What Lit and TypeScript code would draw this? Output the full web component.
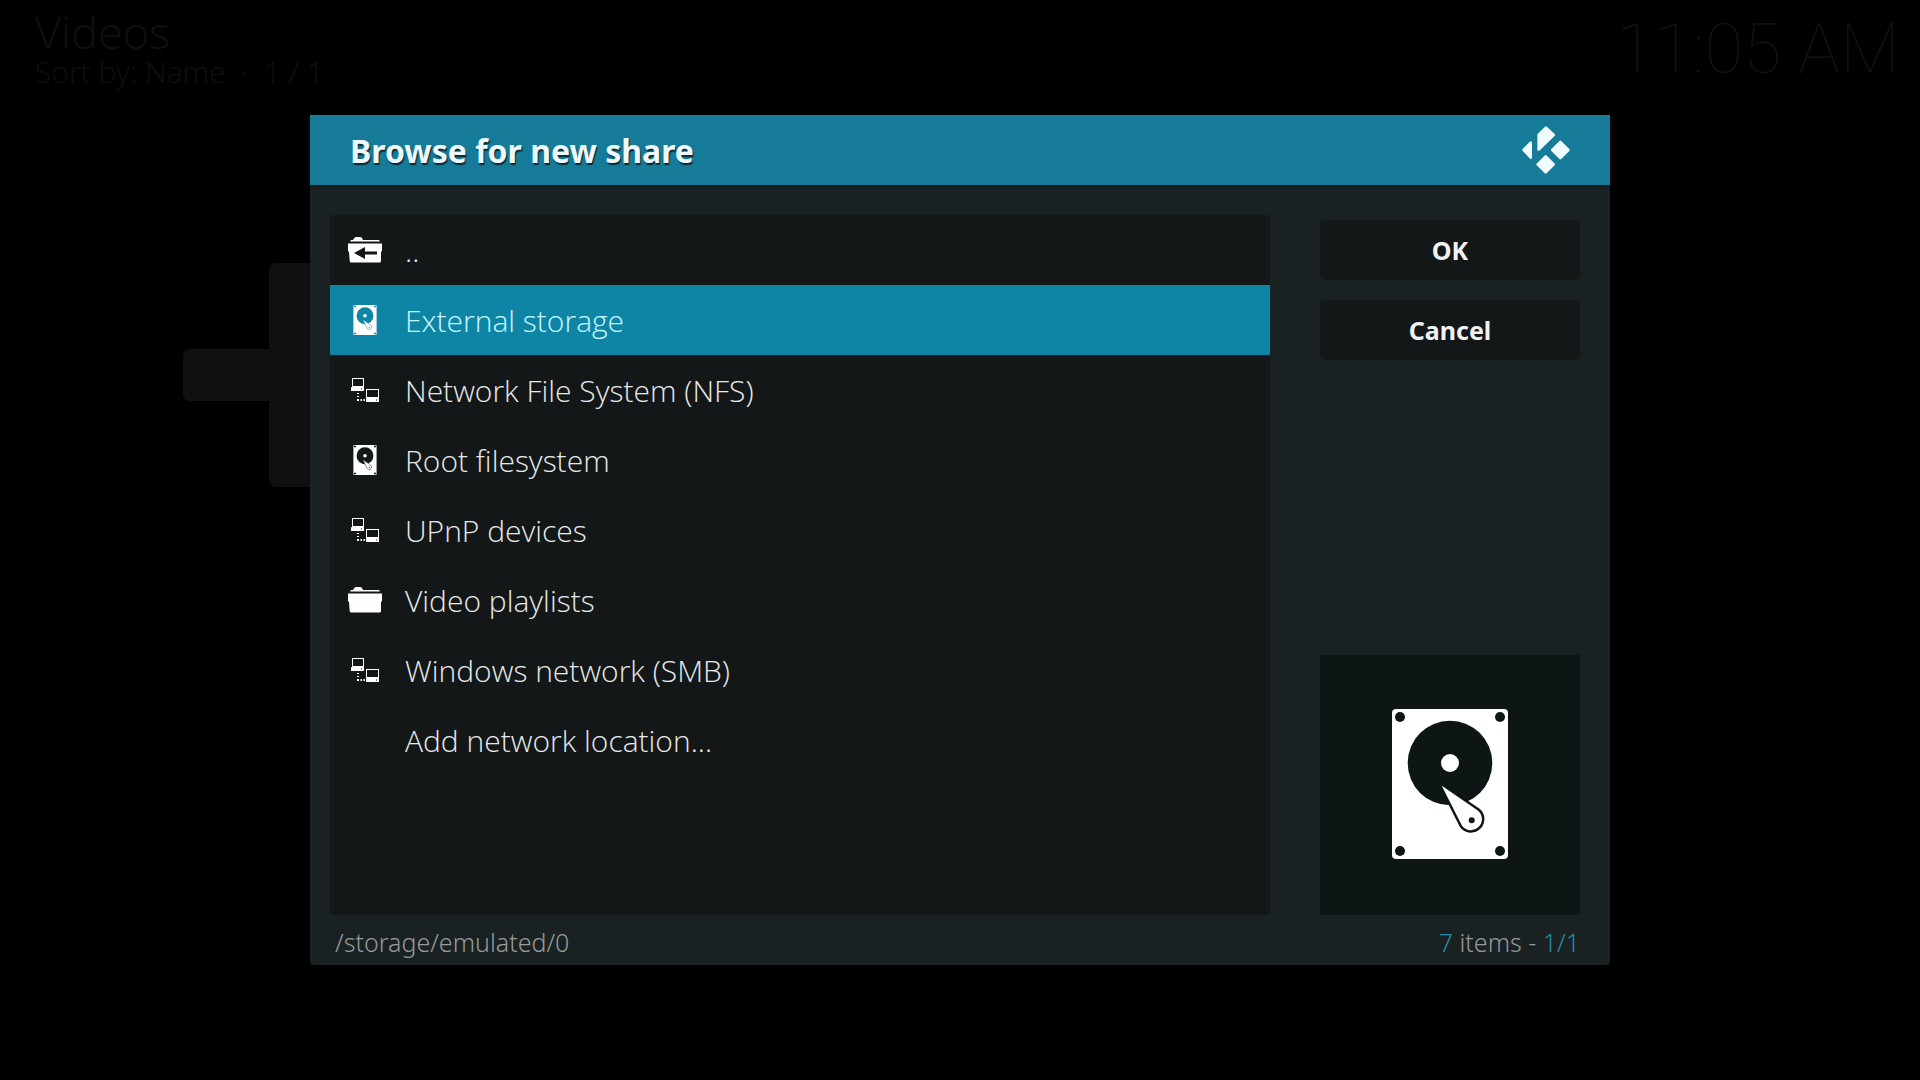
import { LitElement, html, svg, css, nothing } from "lit";
import { customElement, property, state } from "lit/decorators.js";
import { classMap } from "lit/directives/class-map.js";

type IconName = "up" | "drive" | "network" | "folder" | "none";

interface Entry {
  label: string;
  icon: IconName;
}

const ENTRIES: Entry[] = [
  { label: "..", icon: "up" },
  { label: "External storage", icon: "drive" },
  { label: "Network File System (NFS)", icon: "network" },
  { label: "Root filesystem", icon: "drive" },
  { label: "UPnP devices", icon: "network" },
  { label: "Video playlists", icon: "folder" },
  { label: "Windows network (SMB)", icon: "network" },
  { label: "Add network location...", icon: "none" },
];

const folderShape = svg`
  <path d="M2 4.5 L3 3 H5 L6 1.5 Q6.500 0 8 0 H12 Q14 0 14.500 2 L15 3 H31 L32 4.500 Z"/>
  <path d="M0 6.500 H34 V14 L33 15 V24 Q33 25.500 31.500 25.500 H3 Q2 25.500 1.700 24 L1 15 L0 14 Z"/>`;

@customElement("media-icon")
class MediaIcon extends LitElement {
  @property() name: IconName = "none";

  static styles = css`
    :host {
      display: grid;
      place-items: center;
    }
    svg {
      display: block;
    }
    .solid {
      fill: #fff;
    }
    .cut {
      fill: var(--cut, #131717);
    }
    .arm {
      fill: #fff;
      stroke: var(--cut, #131717);
      stroke-width: 2.5;
      stroke-linejoin: round;
    }
    .drive {
      width: var(--drive-width, 24px);
      height: var(--drive-height, 30px);
    }
    .screen {
      fill: none;
      stroke: #fff;
      stroke-width: 1;
    }
  `;

  render() {
    switch (this.name) {
      case "up":
        return html`<svg class="solid" width="34" height="26" viewBox="0 0 34 26" aria-hidden="true">
          ${folderShape}
          <path class="cut" d="M6 16 L17 10 V14.500 H29 V17.500 H17 V22 Z" />
        </svg>`;
      case "folder":
        return html`<svg class="solid" width="34" height="26" viewBox="0 0 34 26" aria-hidden="true">
          ${folderShape}
        </svg>`;
      case "drive":
        return html`<svg class="drive" viewBox="0 0 116 150" aria-hidden="true">
          <rect class="solid" width="116" height="150" rx="4" />
          <circle class="cut" cx="8" cy="8" r="5" />
          <circle class="cut" cx="108" cy="8" r="5" />
          <circle class="cut" cx="8" cy="142" r="5" />
          <circle class="cut" cx="108" cy="142" r="5" />
          <circle class="cut" cx="58" cy="54" r="42.300" />
          <circle class="solid" cx="58" cy="54" r="9" />
          <path class="arm" d="M46.500 73 L86.500 100.500 A12.300 12.300 0 1 1 69 117.500 Z" />
          <circle class="cut" cx="79.700" cy="111.300" r="3" />
        </svg>`;
      case "network":
        return html`<svg width="28" height="24" viewBox="0 0 28 24" aria-hidden="true">
          <rect class="screen" x="1.500" y="0.500" width="11" height="8" />
          <rect class="solid" x="0" y="9" width="13" height="4" rx="0.500" />
          <rect class="cut" x="10" y="10.500" width="1" height="1" />
          <rect class="screen" x="15.500" y="11.500" width="12" height="8" />
          <rect class="solid" x="15" y="20" width="13" height="4" rx="0.500" />
          <rect class="cut" x="25" y="21.500" width="1" height="1" />
          <path class="solid" d="M6 15h2v1h-2z M6 18h2v1h-2z M6 21h2v2h-2z M9.500 21h1.500v2h-1.500z M12.500 21h1.500v2h-1.500z" />
        </svg>`;
      default:
        return nothing;
    }
  }
}

@customElement("app-root")
class AppRoot extends LitElement {
  @state() selected = 1;

  static styles = css`
    :host {
      display: grid;
      min-height: 100vh;
      background: #000;
      color: #e6eaea;
      font-family: "Noto Sans", "Open Sans", sans-serif;
      font-weight: 300;
      overflow: hidden;
    }
    * {
      box-sizing: border-box;
    }
    .backdrop,
    .stage {
      grid-area: 1 / 1;
    }
    .backdrop {
      color: #101010;
      font-family: "Open Sans", "Noto Sans", sans-serif;
    }
    .topbar {
      display: flex;
      justify-content: space-between;
      padding: 2px 20px 0 35px;
    }
    .screen-title {
      margin: 0;
      font-size: 45px;
      line-height: 60px;
      font-weight: 300;
    }
    .sort {
      margin: 0;
      font-size: 30px;
      line-height: 20px;
      white-space: pre;
    }
    .clock {
      font-family: Roboto, sans-serif;
      font-weight: 100;
      font-size: 70px;
      line-height: 94px;
    }
    .plus {
      display: block;
      margin: 167px 0 0 183px;
      fill: #101010;
    }
    .stage {
      position: relative;
      display: grid;
      place-items: center;
      padding: 40px;
    }
    .dialog {
      width: 100%;
      max-width: 1300px;
      background: #1a2123;
      border-radius: 0 0 3px 3px;
    }
    .titlebar {
      display: flex;
      align-items: center;
      justify-content: space-between;
      height: 70px;
      padding: 0 40px;
      background: #167b98;
      box-shadow: 0 1px 3px #0a1416;
    }
    .title {
      margin: 0;
      color: #eef8ff;
      font-size: 32px;
      font-weight: 700;
      text-shadow: 1px 2px 1px #0b2a36;
    }
    .logo {
      display: block;
      fill: #f0fcff;
      stroke: #f0fcff;
      stroke-width: 8;
      stroke-linejoin: round;
    }
    .content {
      display: grid;
      grid-template-columns: 1fr 260px;
      gap: 50px;
      padding: 30px 30px 0 20px;
    }
    .list {
      margin: 0;
      padding: 0;
      min-height: 700px;
      list-style: none;
      background: #131717;
      border-radius: 3px;
      font-family: "Open Sans", "Noto Sans", sans-serif;
    }
    .row {
      display: flex;
      align-items: center;
      gap: 20px;
      width: 100%;
      height: 70px;
      padding: 0 15px;
      border: 0;
      background: none;
      color: inherit;
      font: inherit;
      font-size: 30px;
      text-align: left;
    }
    .row.selected {
      --cut: #0f85a6;
      background: #0f85a6;
      color: #c8f8ff;
    }
    .row-icon {
      width: 40px;
    }
    .side {
      display: flex;
      flex-direction: column;
      gap: 20px;
      padding-top: 5px;
    }
    .action {
      height: 60px;
      padding: 0;
      border: 0;
      border-radius: 5px;
      background: #131717;
      color: #f0f2f2;
      font: inherit;
      font-size: 25px;
      font-weight: 700;
    }
    .preview {
      --cut: #0e1515;
      --drive-width: 116px;
      --drive-height: 150px;
      height: 260px;
      margin-top: auto;
      padding-bottom: 2px;
      background: #0e1515;
    }
    .status {
      display: flex;
      justify-content: space-between;
      height: 50px;
      padding: 5px 30px 0 25px;
      color: #959a9b;
      font-size: 25px;
      line-height: 45px;
    }
    .accent {
      color: #228ba4;
    }
  `;

  render() {
    return html`
      <div class="backdrop">
        <header class="topbar">
          <div>
            <h1 class="screen-title">Videos</h1>
            <p class="sort">Sort by: Name  ·  1 / 1</p>
          </div>
          <time class="clock">11:05 AM</time>
        </header>
        <svg class="plus" width="224" height="224" viewBox="0 0 224 224" aria-hidden="true">
          <rect x="0" y="86" width="224" height="52" rx="7" />
          <rect x="86" y="0" width="52" height="224" rx="7" />
        </svg>
      </div>
      <div class="stage">
        <section class="dialog" role="dialog" aria-labelledby="dialog-title">
          <header class="titlebar">
            <h2 class="title" id="dialog-title">Browse for new share</h2>
            <svg class="logo" width="48" height="48" viewBox="0 0 144 144" aria-hidden="true">
              <path d="M72 5 L95 27 L50 71 V26 Z" />
              <path d="M5 72 L26 50 V95 Z" />
              <path d="M115 48 L139 72 L115 96 L91 72 Z" />
              <path d="M71 91 L95 115 L71 139 L47 115 Z" />
            </svg>
          </header>
          <div class="content">
            <ul class="list">
              ${ENTRIES.map(
                (entry, i) => html`<li>
                  <button
                    type="button"
                    class=${classMap({ row: true, selected: i === this.selected })}
                    @click=${() => (this.selected = i)}
                  >
                    <media-icon class="row-icon" .name=${entry.icon}></media-icon>
                    <span>${entry.label}</span>
                  </button>
                </li>`
              )}
            </ul>
            <div class="side">
              <button type="button" class="action">OK</button>
              <button type="button" class="action">Cancel</button>
              <media-icon class="preview" .name=${"drive"}></media-icon>
            </div>
          </div>
          <footer class="status">
            <span>/storage/emulated/0</span>
            <span><span class="accent">7</span> items - <span class="accent">1/1</span></span>
          </footer>
        </section>
      </div>
    `;
  }
}
